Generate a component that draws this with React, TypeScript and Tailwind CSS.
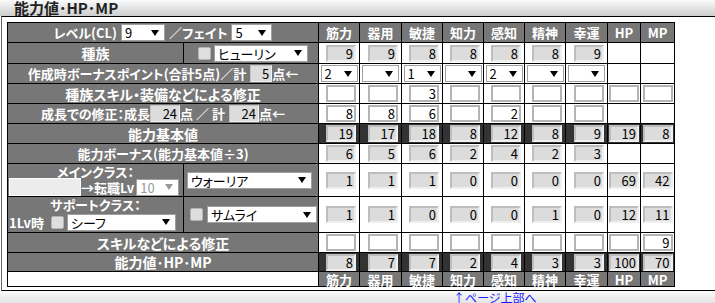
import React from 'react';

const JP = "font-['Noto_Sans_CJK_JP',sans-serif] [font-feature-settings:'palt']";

const heads = ['筋力', '器用', '敏捷', '知力', '感知', '精神', '幸運', 'HP', 'MP'];

type Kind = 'gray' | 'white' | 'sel' | 'none';

function Arrow({ dim }: { dim?: boolean }) {
    return (
        <svg width="8" height="6" viewBox="0 0 8 6" className="shrink-0">
            <polygon points="0,0 8,0 4,6" fill={dim ? '#999' : '#000'} />
        </svg>
    );
}

function Sel({ v, w, dim }: { v: string; w: string; dim?: boolean }) {
    return (
        <div className={`${w} flex h-[17px] shrink-0 items-center justify-between border border-[#a0a0a0] bg-white pl-[3px] pr-[5px] text-[13px] leading-none font-normal ${dim ? 'text-[#999]' : 'text-black'}`}>
            <span>{v}</span>
            <Arrow dim={dim} />
        </div>
    );
}

function Check() {
    return <div className="h-[13px] w-[13px] shrink-0 rounded-[2px] border border-[#b5b5b5] bg-[#dedede]" />;
}

function GrayBox({ v, w }: { v: string; w: string }) {
    return (
        <div className={`${w} h-[17px] shrink-0 bg-[#dcdcdc] border border-t-[#c4c4c4] border-l-[#c4c4c4] border-r-[#f2f2f2] border-b-[#f2f2f2] pr-[2px] text-right text-[13px] leading-[15px] font-normal text-black`}>
            {v}
        </div>
    );
}

function Inp({ v, kind }: { v: string; kind: Kind }) {
    if (kind === 'gray') {
        return (
            <div className="h-[17px] w-[30px] bg-[#dcdcdc] border-2 border-t-[#bdbdbd] border-l-[#bdbdbd] border-r-[#efefef] border-b-[#efefef] pr-[1px] text-right text-[13px] leading-[13px] text-black">
                {v}
            </div>
        );
    }
    if (kind === 'white') {
        return (
            <div className="h-[17px] w-[30px] bg-white border-2 border-[#b4b4b4] pr-[1px] text-right text-[13px] leading-[13px] text-black">
                {v}
            </div>
        );
    }
    if (kind === 'sel') {
        return <Sel v={v} w="w-[37px]" />;
    }
    return null;
}

function StatCells({ vals, kind, dark, hpKind }: { vals: string[]; kind: Kind; dark?: boolean; hpKind?: Kind }) {
    return (
        <>
            {heads.map((h, i) => {
                const hp = i >= 7;
                const k = hp ? hpKind ?? kind : kind;
                return (
                    <td key={h} className={`border border-black p-0 ${dark ? 'bg-[#333]' : 'bg-white'}`}>
                        <div className={`flex items-center ${k === 'sel' ? 'justify-center' : hp ? 'justify-center' : 'justify-end pr-[3px]'}`}>
                            <Inp v={vals[i] ?? ''} kind={k} />
                        </div>
                    </td>
                );
            })}
        </>
    );
}

function HeadCells() {
    return (
        <>
            {heads.map((h) => (
                <td key={h} className="border border-black bg-[#777] p-0 text-center text-[13px] leading-[13px] font-bold text-white">
                    {h}
                </td>
            ))}
        </>
    );
}

const label = 'border border-black bg-[#777] p-0 text-center font-bold text-white whitespace-nowrap';

export default function App() {
    return (
        <div className={`h-[303px] w-[715px] overflow-hidden bg-white ${JP}`}>
            <div className="h-[16px] bg-linear-to-b from-[#fbfbfb] to-[#cdcdcd] pl-[14px] text-[15px] font-bold leading-[15px] text-[#222] [font-feature-settings:normal]">
                能力値･HP･MP
            </div>
            <div className="ml-px border-t border-b border-l border-t-black border-b-black border-l-[#666] pt-[5px] pl-[5px] pb-[3px]">
                <table className="w-[667px] table-fixed border-collapse text-[13px] leading-none">
                    <colgroup>
                        <col className="w-[176px]" />
                        <col className="w-[135px]" />
                        <col className="w-[41px]" />
                        <col className="w-[42px]" />
                        <col className="w-[41px]" />
                        <col className="w-[41px]" />
                        <col className="w-[41px]" />
                        <col className="w-[41px]" />
                        <col className="w-[42px]" />
                        <col className="w-[33px]" />
                        <col className="w-[34px]" />
                    </colgroup>
                    <tbody>
                        <tr className="h-[20px]">
                            <td colSpan={2} className={label}>
                                <div className="flex items-center justify-center gap-[4px]">
                                    <span>レベル(CL)</span>
                                    <Sel v="9" w="w-[44px]" />
                                    <span>／フェイト</span>
                                    <Sel v="5" w="w-[41px]" />
                                </div>
                            </td>
                            <HeadCells />
                        </tr>
                        <tr className="h-[21px]">
                            <td className={`${label} text-[14px]`}>種族</td>
                            <td className={label}>
                                <div className="flex items-center justify-center gap-[3px] pl-[4px]">
                                    <Check />
                                    <Sel v="ヒューリン" w="w-[94px]" />
                                </div>
                            </td>
                            <StatCells vals={['9', '9', '8', '8', '8', '8', '9']} kind="gray" hpKind="none" />
                        </tr>
                        <tr className="h-[20px]">
                            <td colSpan={2} className={label}>
                                <div className="flex items-center justify-center">
                                    <span>作成時ボーナスポイント(合計5点)／計</span>
                                    <GrayBox v="5" w="ml-[4px] w-[22px]" />
                                    <span>点←</span>
                                </div>
                            </td>
                            <StatCells vals={['2', '', '1', '', '2', '', '']} kind="sel" hpKind="none" />
                        </tr>
                        <tr className="h-[20px]">
                            <td colSpan={2} className={`${label} text-[14px]`}>種族スキル・装備などによる修正</td>
                            <StatCells vals={['', '', '3']} kind="white" />
                        </tr>
                        <tr className="h-[20px]">
                            <td colSpan={2} className={label}>
                                <div className="flex items-center justify-center">
                                    <span>成長での修正：成長</span>
                                    <GrayBox v="24" w="w-[30px]" />
                                    <span>点 ／ 計</span>
                                    <GrayBox v="24" w="ml-[4px] w-[30px]" />
                                    <span>点←</span>
                                </div>
                            </td>
                            <StatCells vals={['8', '8', '6', '', '2', '', '']} kind="white" hpKind="none" />
                        </tr>
                        <tr className="h-[20px]">
                            <td colSpan={2} className={`${label} text-[14px]`}>能力基本値</td>
                            <StatCells vals={['19', '17', '18', '8', '12', '8', '9', '19', '8']} kind="gray" dark />
                        </tr>
                        <tr className="h-[20px]">
                            <td colSpan={2} className={label}>能力ボーナス(能力基本値÷3)</td>
                            <StatCells vals={['6', '5', '6', '2', '4', '2', '3']} kind="gray" hpKind="none" />
                        </tr>
                        <tr className="h-[33px]">
                            <td className={label}>
                                <div className="flex h-[31px] flex-col">
                                    <div className="h-[13px] leading-[13px]">メインクラス：</div>
                                    <div className="flex items-end pl-px">
                                        <div className="h-[18px] w-[72px] shrink-0 border border-white bg-[#ececec]" />
                                        <span className="mb-[2px] shrink-0">→転職Lv</span>
                                        <div className="ml-[2px]">
                                            <Sel v="10" w="w-[43px]" dim />
                                        </div>
                                    </div>
                                </div>
                            </td>
                            <td className={label}>
                                <div className="flex items-center pl-[3px]">
                                    <Sel v="ウォーリア" w="w-[125px]" />
                                </div>
                            </td>
                            <StatCells vals={['1', '1', '1', '0', '0', '0', '0', '69', '42']} kind="gray" />
                        </tr>
                        <tr className="h-[36px]">
                            <td className={label}>
                                <div className="flex h-[34px] flex-col gap-[3px]">
                                    <div className="h-[13px] leading-[13px]">サポートクラス：</div>
                                    <div className="flex items-center pl-px">
                                        <span className="shrink-0">1Lv時</span>
                                        <div className="ml-[7px]">
                                            <Check />
                                        </div>
                                        <div className="ml-[3px]">
                                            <Sel v="シーフ" w="w-[109px]" />
                                        </div>
                                    </div>
                                </div>
                            </td>
                            <td className={label}>
                                <div className="flex items-center gap-[4px] pl-[6px]">
                                    <Check />
                                    <Sel v="サムライ" w="w-[110px]" />
                                </div>
                            </td>
                            <StatCells vals={['1', '1', '0', '0', '0', '1', '0', '12', '11']} kind="gray" />
                        </tr>
                        <tr className="h-[20px]">
                            <td colSpan={2} className={`${label} text-[14px]`}>スキルなどによる修正</td>
                            <StatCells vals={['', '', '', '', '', '', '', '', '9']} kind="white" />
                        </tr>
                        <tr className="h-[19px]">
                            <td colSpan={2} className={`${label} text-[14px]`}>能力値･HP･MP</td>
                            <StatCells vals={['8', '7', '7', '2', '4', '3', '3', '100', '70']} kind="gray" dark />
                        </tr>
                        <tr className="h-[15px]">
                            <td colSpan={2} className="border border-black bg-white p-0" />
                            <HeadCells />
                        </tr>
                    </tbody>
                </table>
            </div>
            <div className="h-[13px] bg-linear-to-b from-[#fbfbfb] to-[#e2e2e2] pl-[453px] pt-[1px]">
                <a href="#" className="block text-[12px] leading-[12px] text-[#1a1aff]">
                    ↑ページ上部へ
                </a>
            </div>
        </div>
    );
}
